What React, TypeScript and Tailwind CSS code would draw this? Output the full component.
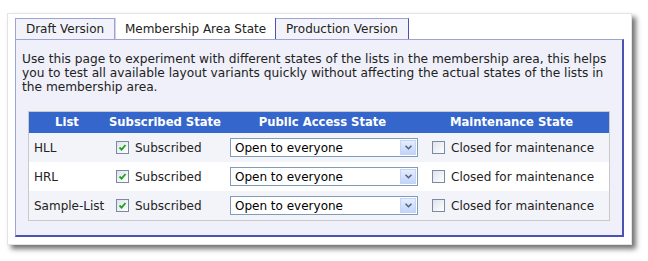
import React from "react";

const LISTS = ["HLL", "HRL", "Sample-List"];

function CheckBox({ checked }: { checked: boolean }) {
  return (
    <span className="inline-flex h-[13px] w-[13px] shrink-0 items-center justify-center border border-[#7a8aa6] bg-[linear-gradient(135deg,#dfe3ea,#ffffff)]">
      {checked && (
        <svg width="9" height="9" viewBox="0 0 9 9">
          <path d="M1.5 4.5 L3.6 6.6 L7.5 2" fill="none" stroke="#21a121" strokeWidth="1.8" />
        </svg>
      )}
    </span>
  );
}

function Select() {
  return (
    <div className="flex h-[19px] w-[188px] items-center border border-[#7f9db9] bg-white">
      <span className="flex-1 pl-[4px] text-[12px] leading-none text-black">Open to everyone</span>
      <span className="m-[1px] flex h-[15px] w-[16px] items-center justify-center border border-[#c3d3fd] bg-[linear-gradient(#e6eefc,#c3d4f7)]">
        <svg width="7" height="5" viewBox="0 0 7 5">
          <path d="M0.5 0.8 L3.5 3.8 L6.5 0.8" fill="none" stroke="#4d6185" strokeWidth="1.5" />
        </svg>
      </span>
    </div>
  );
}

export default function App() {
  return (
    <div className="h-[261px] w-[648px] bg-white pl-[7px] pt-[13px] font-['DejaVu_Sans',sans-serif] text-[12px] text-[#222]">
      <div className="w-[625px] border border-[#e4e4e4] bg-white px-[7px] pb-[7px] pt-[4px] shadow-[4px_4px_5px_rgba(0,0,0,0.55)]">
        <div className="flex h-[21px] items-end">
          <div className="flex h-[21px] w-[100px] items-center justify-center border border-b-0 border-[#9fa3d4] bg-[#f2f3fa]">
            Draft Version
          </div>
          <div className="flex h-[21px] w-[161px] items-center justify-center border-x border-[#4a53b0] border-l-[#cfd2ea] bg-white">
            Membership Area State
          </div>
          <div className="flex h-[21px] w-[133px] items-center justify-center border border-b-0 border-l-0 border-[#4a53b0] border-t-[#9fa3d4] bg-[#f2f3fa]">
            Production Version
          </div>
        </div>
        <div className="h-[198px] border border-[#9fa3d4] border-b-2 border-b-[#4a53b0] border-r-2 border-r-[#4a53b0] bg-[#eff0f9] px-[6px] pt-[12px]">
          <p className="w-[595px] text-[12.2px] leading-[14px] text-[#222]">
            Use this page to experiment with different states of the lists in the membership area, this helps you to test all available layout variants quickly without affecting the actual states of the lists in the membership area.
          </p>
          <div className="ml-[6px] mt-[17px] w-[582px] border border-[#c9c9c9]">
            <div className="grid h-[21px] grid-cols-[76px_120px_195px_1fr] items-center bg-[#3566cb] text-[11.6px] font-bold text-white">
              <div className="text-center">List</div>
              <div className="text-center">Subscribed State</div>
              <div className="text-center">Public Access State</div>
              <div className="pr-[6px] text-center">Maintenance State</div>
            </div>
            {LISTS.map((name, i) => (
              <div
                key={name}
                className={`grid h-[29px] grid-cols-[76px_120px_195px_1fr] items-center whitespace-nowrap ${i % 2 === 1 ? "bg-white" : "bg-[#f3f4f9]"}`}
              >
                <div className="pl-[5px]">{name}</div>
                <div className="flex items-center gap-[6px] pl-[11px]">
                  <CheckBox checked />
                  <span>Subscribed</span>
                </div>
                <div className="pl-[5px]">
                  <Select />
                </div>
                <div className="flex items-center gap-[6px] pl-[12px]">
                  <CheckBox checked={false} />
                  <span>Closed for maintenance</span>
                </div>
              </div>
            ))}
          </div>
        </div>
      </div>
    </div>
  );
}
